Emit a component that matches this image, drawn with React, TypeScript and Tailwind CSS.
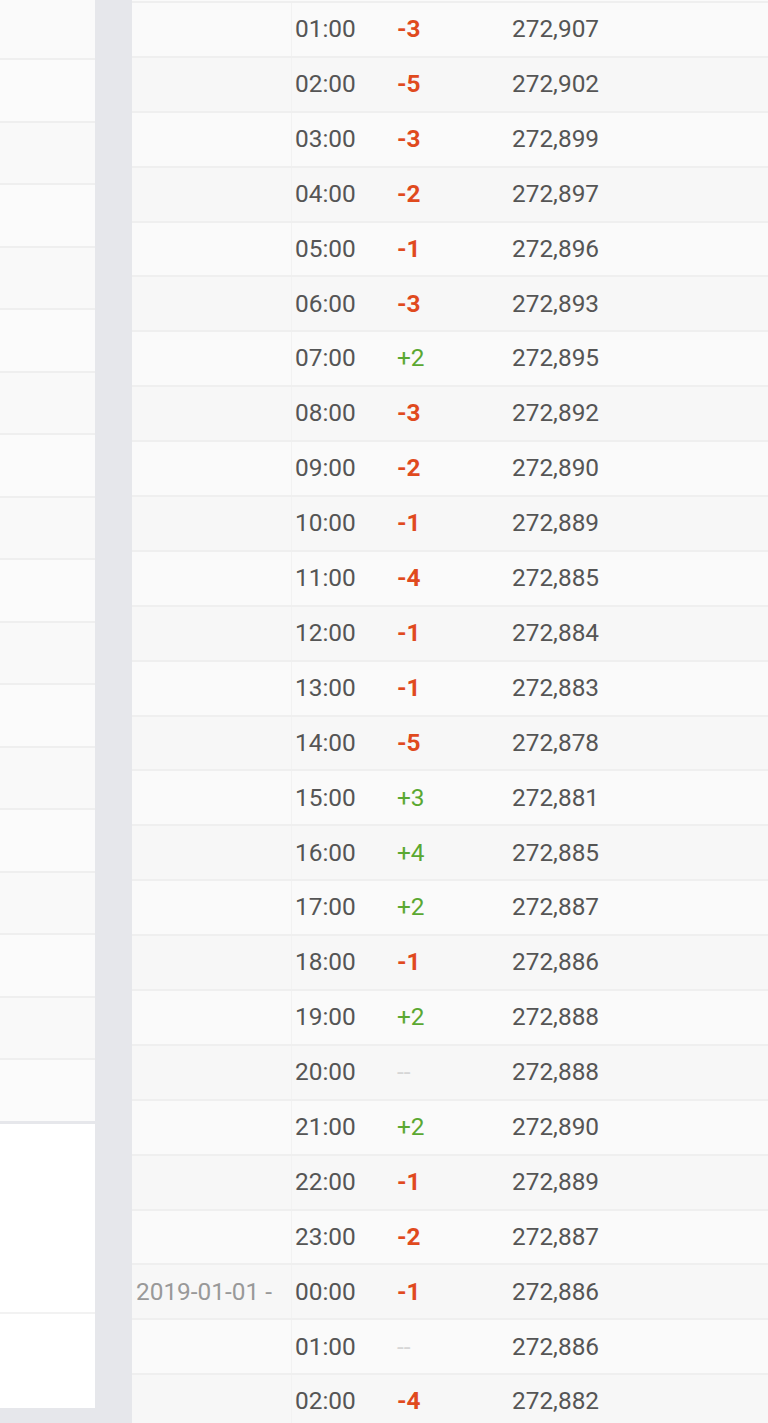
const rows: { date?: string; time: string; change: number; total: string }[] = [
  { time: '01:00', change: -3, total: '272,907' },
  { time: '02:00', change: -5, total: '272,902' },
  { time: '03:00', change: -3, total: '272,899' },
  { time: '04:00', change: -2, total: '272,897' },
  { time: '05:00', change: -1, total: '272,896' },
  { time: '06:00', change: -3, total: '272,893' },
  { time: '07:00', change: 2, total: '272,895' },
  { time: '08:00', change: -3, total: '272,892' },
  { time: '09:00', change: -2, total: '272,890' },
  { time: '10:00', change: -1, total: '272,889' },
  { time: '11:00', change: -4, total: '272,885' },
  { time: '12:00', change: -1, total: '272,884' },
  { time: '13:00', change: -1, total: '272,883' },
  { time: '14:00', change: -5, total: '272,878' },
  { time: '15:00', change: 3, total: '272,881' },
  { time: '16:00', change: 4, total: '272,885' },
  { time: '17:00', change: 2, total: '272,887' },
  { time: '18:00', change: -1, total: '272,886' },
  { time: '19:00', change: 2, total: '272,888' },
  { time: '20:00', change: 0, total: '272,888' },
  { time: '21:00', change: 2, total: '272,890' },
  { time: '22:00', change: -1, total: '272,889' },
  { time: '23:00', change: -2, total: '272,887' },
  { date: '2019-01-01 -', time: '00:00', change: -1, total: '272,886' },
  { time: '01:00', change: 0, total: '272,886' },
  { time: '02:00', change: -4, total: '272,882' },
]

function Change({ value }: { value: number }) {
  if (value === 0) return <span className="text-[#d6d6d6]">--</span>
  if (value > 0) return <span className="text-[#5aa832]">+{value}</span>
  return <span className="font-bold text-[#e04a1e]">{value}</span>
}

export default function App() {
  const sideRows = Array.from({ length: 17 })
  return (
    <div className="flex h-[1423px] overflow-hidden bg-[#e6e7eb] font-['Roboto',sans-serif]">
      <div className="flex w-[95px] shrink-0 flex-col">
        <div className="h-[58px] bg-[#fafafa]" />
        {sideRows.map((_, i) => (
          <div key={i} className={`h-[62.5px] border-t-2 border-[#efefef] ${i % 2 === 0 ? 'bg-[#fbfbfb]' : 'bg-[#f9f9f9]'}`} />
        ))}
        <div className="mt-[3px] bg-white">
          <div className="h-[190px] border-b-2 border-[#f2f2f2]" />
          <div className="h-[94px]" />
        </div>
      </div>
      <div className="ml-[37px] flex-1 bg-[#fafafa]">
        <div className="h-px" />
        {rows.map((r, i) => (
          <div
            key={i}
            className={`flex h-[54.9px] items-center border-t-2 border-[#efefef] text-[24.4px] text-[#555] ${i % 2 === 0 ? 'bg-[#fafafa]' : 'bg-[#f7f7f7]'}`}
          >
            <div className="flex h-full w-[160px] items-center border-r border-[#f2f2f2] pl-[4px] text-[#999]">{r.date}</div>
            <div className="w-[105px] pl-[3px]">{r.time}</div>
            <div className="w-[115px]">
              <Change value={r.change} />
            </div>
            <div>{r.total}</div>
          </div>
        ))}
      </div>
    </div>
  )
}
